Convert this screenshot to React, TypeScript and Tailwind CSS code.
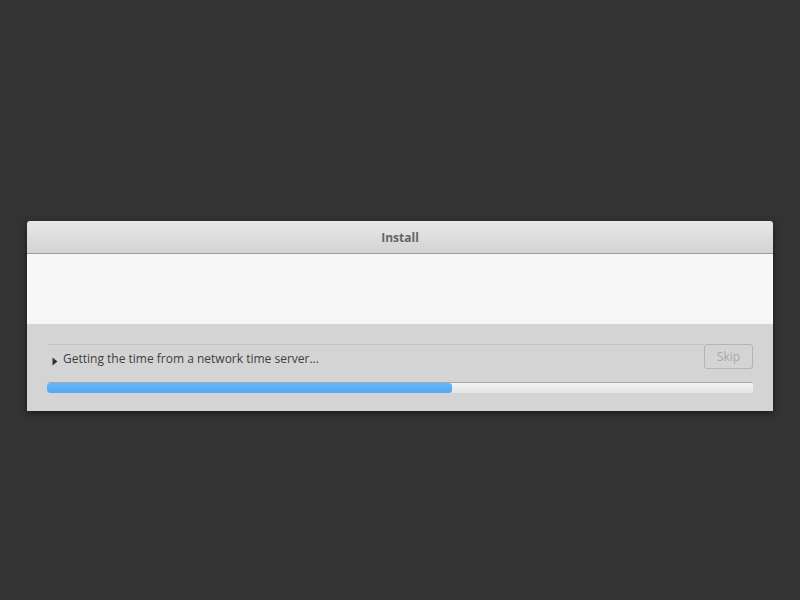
export default function App() {
  return (
    <div className="min-h-[600px] w-[800px] bg-[#333333] px-[27px] pt-[221px] font-['Open_Sans',sans-serif]">
      <div className="overflow-hidden rounded-t-[3px] shadow-[0_2px_6px_rgba(0,0,0,0.5)]">
        <div className="flex h-[33px] items-center justify-center border-b border-[#9a9a9a] bg-gradient-to-b from-[#e8e8e8] to-[#d3d3d3] pt-[1px]">
          <span className="text-[12px] font-bold text-[#666666]">Install</span>
        </div>
        <div className="h-[70px] bg-[#f6f6f6]" />
        <div className="h-[87px] bg-[#d4d4d4] px-[20px] pt-[20px]">
          <div className="flex h-[25px] items-start">
            <div className="flex h-[25px] flex-1 items-center border-t border-[#c4c4c4] pl-[5px] pt-[3px]">
              <svg width="6" height="9" viewBox="0 0 6 9" className="mr-[5px] mt-[5px]">
                <path d="M0.5 0.5 L5.5 4.5 L0.5 8.5 Z" fill="#333333" />
              </svg>
              <span className="text-[12px] text-[#404040]">Getting the time from a network time server...</span>
            </div>
            <button className="h-[25px] w-[49px] rounded-[3px] border border-[#b4b4b4] pt-[1px] text-[12px] text-[#a8a8a8]">
              Skip
            </button>
          </div>
          <div className="mt-[13px] h-[11px] overflow-hidden rounded-[2px] border-t border-[#a6a6a6] bg-gradient-to-b from-[#f4f4f4] to-[#e4e4e4]">
            <div
              className="h-full rounded-[3px] bg-gradient-to-b from-[#66b6fa] to-[#55a8f4]"
              style={{ width: `${(405 / 706) * 100}%` }}
            />
          </div>
        </div>
      </div>
    </div>
  );
}
